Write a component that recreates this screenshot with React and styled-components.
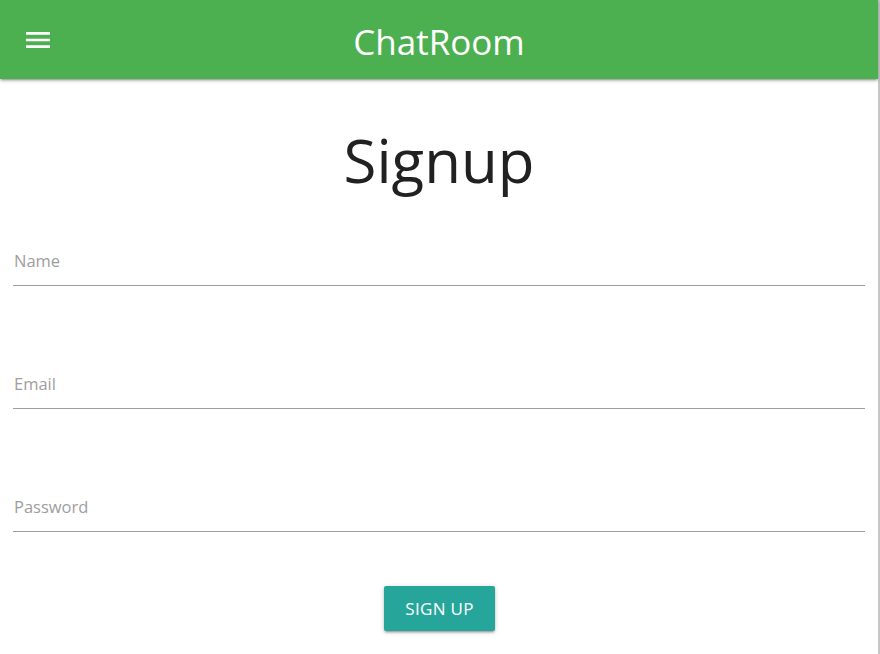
import React from "react";
import styled, { createGlobalStyle } from "styled-components";

const Global = createGlobalStyle`
  html, body { margin: 0; padding: 0; background: #fff; }
  body { font-family: "Open Sans", "Noto Sans", sans-serif; }
  * { box-sizing: border-box; }
`;

const Page = styled.div`
  width: 880px;
  min-height: 654px;
  border-right: 2px solid #c6c6c6;
  background: #fff;
`;

const Nav = styled.header`
  height: 79px;
  background: #4caf50;
  display: grid;
  grid-template-columns: 60px 1fr 60px;
  align-items: center;
  box-shadow: 0 2px 2px 0 rgba(0,0,0,.14), 0 3px 1px -2px rgba(0,0,0,.12), 0 1px 5px 0 rgba(0,0,0,.2);
  position: relative;
  z-index: 1;
`;

const MenuButton = styled.button`
  border: 0;
  background: none;
  padding: 0;
  margin-left: 22px;
  width: 32px;
  height: 32px;
  display: flex;
  color: #fff;
`;

const Brand = styled.div`
  color: #fff;
  font-size: 35px;
  text-align: center;
  line-height: 1;
  margin-top: 4px;
`;

const Main = styled.main`
  padding: 0 13px 0 13px;
  width: 878px;
`;

const Title = styled.h2`
  margin: 47px 0 0 0;
  font-size: 60px;
  line-height: 68px;
  font-weight: 400;
  color: #212121;
  text-align: center;
`;

const Form = styled.form`
  display: flex;
  flex-direction: column;
  gap: 74px;
  margin-top: 43px;
`;

const Field = styled.label`
  display: flex;
  align-items: center;
  height: 49px;
  border-bottom: 1px solid #9e9e9e;
  padding-left: 1px;
  padding-bottom: 1px;
  font-size: 16.5px;
  color: #9e9e9e;
`;

const Actions = styled.div`
  display: flex;
  justify-content: center;
  margin-top: 54px;
`;

const Button = styled.button`
  width: 111px;
  height: 45px;
  border: 0;
  border-radius: 2px;
  background: #26a69a;
  color: #fff;
  font-family: inherit;
  font-size: 17px;
  letter-spacing: 0.3px;
  text-transform: uppercase;
  box-shadow: 0 2px 2px 0 rgba(0,0,0,.14), 0 3px 1px -2px rgba(0,0,0,.12), 0 1px 5px 0 rgba(0,0,0,.2);
  margin-left: 1px;
`;

export default function App() {
  return (
    <Page>
      <Global />
      <Nav>
        <MenuButton aria-label="menu">
          <svg width="32" height="32" viewBox="0 0 24 24" fill="currentColor">
            <path d="M3 18h18v-2H3v2zm0-5h18v-2H3v2zm0-7v2h18V6H3z" />
          </svg>
        </MenuButton>
        <Brand>ChatRoom</Brand>
        <div />
      </Nav>
      <Main>
        <Title>Signup</Title>
        <Form>
          <Field>Name</Field>
          <Field>Email</Field>
          <Field>Password</Field>
        </Form>
        <Actions>
          <Button type="button">Sign up</Button>
        </Actions>
      </Main>
    </Page>
  );
}
